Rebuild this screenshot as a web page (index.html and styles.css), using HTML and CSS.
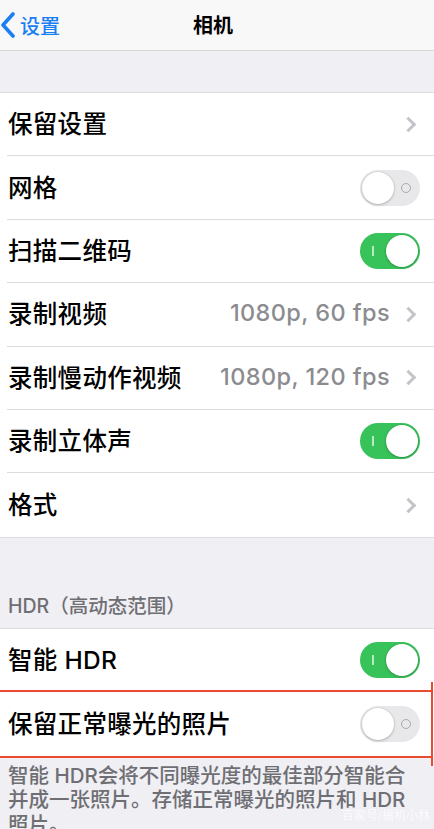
FILE: index.html
```html
<!DOCTYPE html>
<html lang="zh-CN">
<head>
<meta charset="utf-8">
<link rel="stylesheet" href="styles.css">
</head>
<body>
<div class="screen">
  <header class="nav">
    <div class="back">
      <svg class="back-icon" width="16" height="26" viewBox="0 0 16 26"><polyline points="13,2 3,13 13,24" fill="none" stroke="#1a7ff2" stroke-width="3.6" stroke-linecap="round" stroke-linejoin="round"/></svg>
      <span>设置</span>
    </div>
    <div class="title">相机</div>
  </header>

  <div class="gap-top"></div>

  <section class="group">
    <div class="row"><div class="inner"><span class="label">保留设置</span><span class="chev"></span></div></div>
    <div class="row"><div class="inner"><span class="label">网格</span><span class="toggle off"><i class="knob"></i><i class="mark"></i></span></div></div>
    <div class="row"><div class="inner"><span class="label">扫描二维码</span><span class="toggle on"><i class="mark"></i><i class="knob"></i></span></div></div>
    <div class="row"><div class="inner"><span class="label">录制视频</span><span class="value">1080p, 60 fps</span><span class="chev"></span></div></div>
    <div class="row"><div class="inner"><span class="label">录制慢动作视频</span><span class="value">1080p, 120 fps</span><span class="chev"></span></div></div>
    <div class="row"><div class="inner"><span class="label">录制立体声</span><span class="toggle on"><i class="mark"></i><i class="knob"></i></span></div></div>
    <div class="row last"><div class="inner"><span class="label">格式</span><span class="chev"></span></div></div>
  </section>

  <div class="section-head">HDR（高动态范围）</div>

  <section class="group hdr">
    <div class="row"><div class="inner"><span class="label">智能 HDR</span><span class="toggle on"><i class="mark"></i><i class="knob"></i></span></div></div>
    <div class="row last"><div class="inner"><span class="label">保留正常曝光的照片</span><span class="toggle off"><i class="knob"></i><i class="mark"></i></span></div></div>
    <div class="highlight"></div>
  </section>

  <p class="footer">智能 HDR会将不同曝光度的最佳部分智能合<br>并成一张照片。存储正常曝光的照片和 HDR<br>照片。</p>

  <div class="watermark">百家号/搞机小林</div>
</div>
</body>
</html>
```

FILE: styles.css
```css
* { box-sizing: border-box; }
html, body { margin: 0; padding: 0; }
body {
  background: #efeff4;
  font-family: Inter, "Noto Sans CJK SC", "Noto Sans", sans-serif;
  color: #000;
}
.screen {
  position: relative;
  width: 434px;
  height: 829px;
  overflow: hidden;
  background: #efeff4;
}
.nav {
  position: relative;
  height: 51px;
  background: #f8f8f8;
  border-bottom: 1px solid #d9d9dc;
  display: flex;
  align-items: center;
  justify-content: center;
}
.back {
  position: absolute;
  left: 0;
  top: 0;
  height: 50px;
  display: flex;
  align-items: center;
  gap: 4px;
  color: #1a7ff2;
  font-size: 20px;
  font-weight: 500;
}
.back-icon { display: block; }
.title {
  font-size: 20px;
  font-weight: 700;
  margin-top: -2px;
  margin-left: -8px;
}
.gap-top { height: 41px; }
.group {
  position: relative;
  background: #fff;
  border-top: 1px solid #dcdce0;
  border-bottom: 1px solid #dcdce0;
}
.row {
  height: 63.4px;
  padding-left: 7px;
}
.inner {
  height: 100%;
  display: flex;
  align-items: center;
  padding-left: 1px;
  padding-right: 14px;
  border-bottom: 1px solid #dcdce0;
}
.row.last .inner { border-bottom: none; }
.label {
  font-size: 24.5px;
  font-weight: 500;
  flex: 1;
  letter-spacing: 0.3px;
  white-space: nowrap;
  margin-top: -3px;
}
.value {
  font-size: 23.5px;
  font-weight: 500;
  color: #8c8c90;
  margin-right: 13px;
  letter-spacing: 0.4px;
  margin-top: -3px;
}
.chev {
  width: 11px;
  height: 11px;
  border-top: 3px solid #c4c4c8;
  border-right: 3px solid #c4c4c8;
  transform: rotate(45deg);
  margin-right: 6px;
}
.toggle {
  position: relative;
  width: 60px;
  height: 36px;
  border-radius: 18px;
  display: flex;
  align-items: center;
  padding: 2px;
}
.toggle.off {
  background: #e8e8ea;
}
.toggle.on {
  background: #38c25a;
  justify-content: flex-end;
}
.knob {
  width: 32px;
  height: 32px;
  border-radius: 50%;
  background: #fff;
  box-shadow: 0 1px 3px rgba(0,0,0,0.22), 0 0 0 0.5px rgba(0,0,0,0.08);
}
.toggle.off .mark {
  position: absolute;
  right: 9px;
  top: 13px;
  width: 10px;
  height: 10px;
  border: 1.4px solid #a9a9ad;
  border-radius: 50%;
}
.toggle.on .mark {
  position: absolute;
  left: 12px;
  top: 13px;
  width: 1.6px;
  height: 10px;
  background: #b7ecc3;
}
.section-head {
  height: 90px;
  padding: 55px 0 0 8px;
  font-size: 19.5px;
  font-weight: 500;
  color: #6e6e73;
  line-height: 26px;
}
.group.hdr { border-bottom: none; }
.highlight {
  position: absolute;
  left: -20px;
  right: 1px;
  top: 61px;
  height: 68px;
  border-top: 2.5px solid #ea4a2d;
  border-bottom: 2.5px solid #ea4a2d;
  pointer-events: none;
}
.highlight::after {
  content: "";
  position: absolute;
  right: 0;
  top: -10px;
  bottom: -10px;
  width: 2px;
  background: #ea4a2d;
}
.footer {
  margin: 0;
  padding: 8px 0 0 8px;
  font-size: 20.5px;
  font-weight: 500;
  line-height: 24.5px;
  color: #6e6e73;
  white-space: nowrap;
}
.watermark {
  position: absolute;
  right: 4px;
  bottom: 6px;
  font-size: 12px;
  color: rgba(255,255,255,0.75);
}
```
